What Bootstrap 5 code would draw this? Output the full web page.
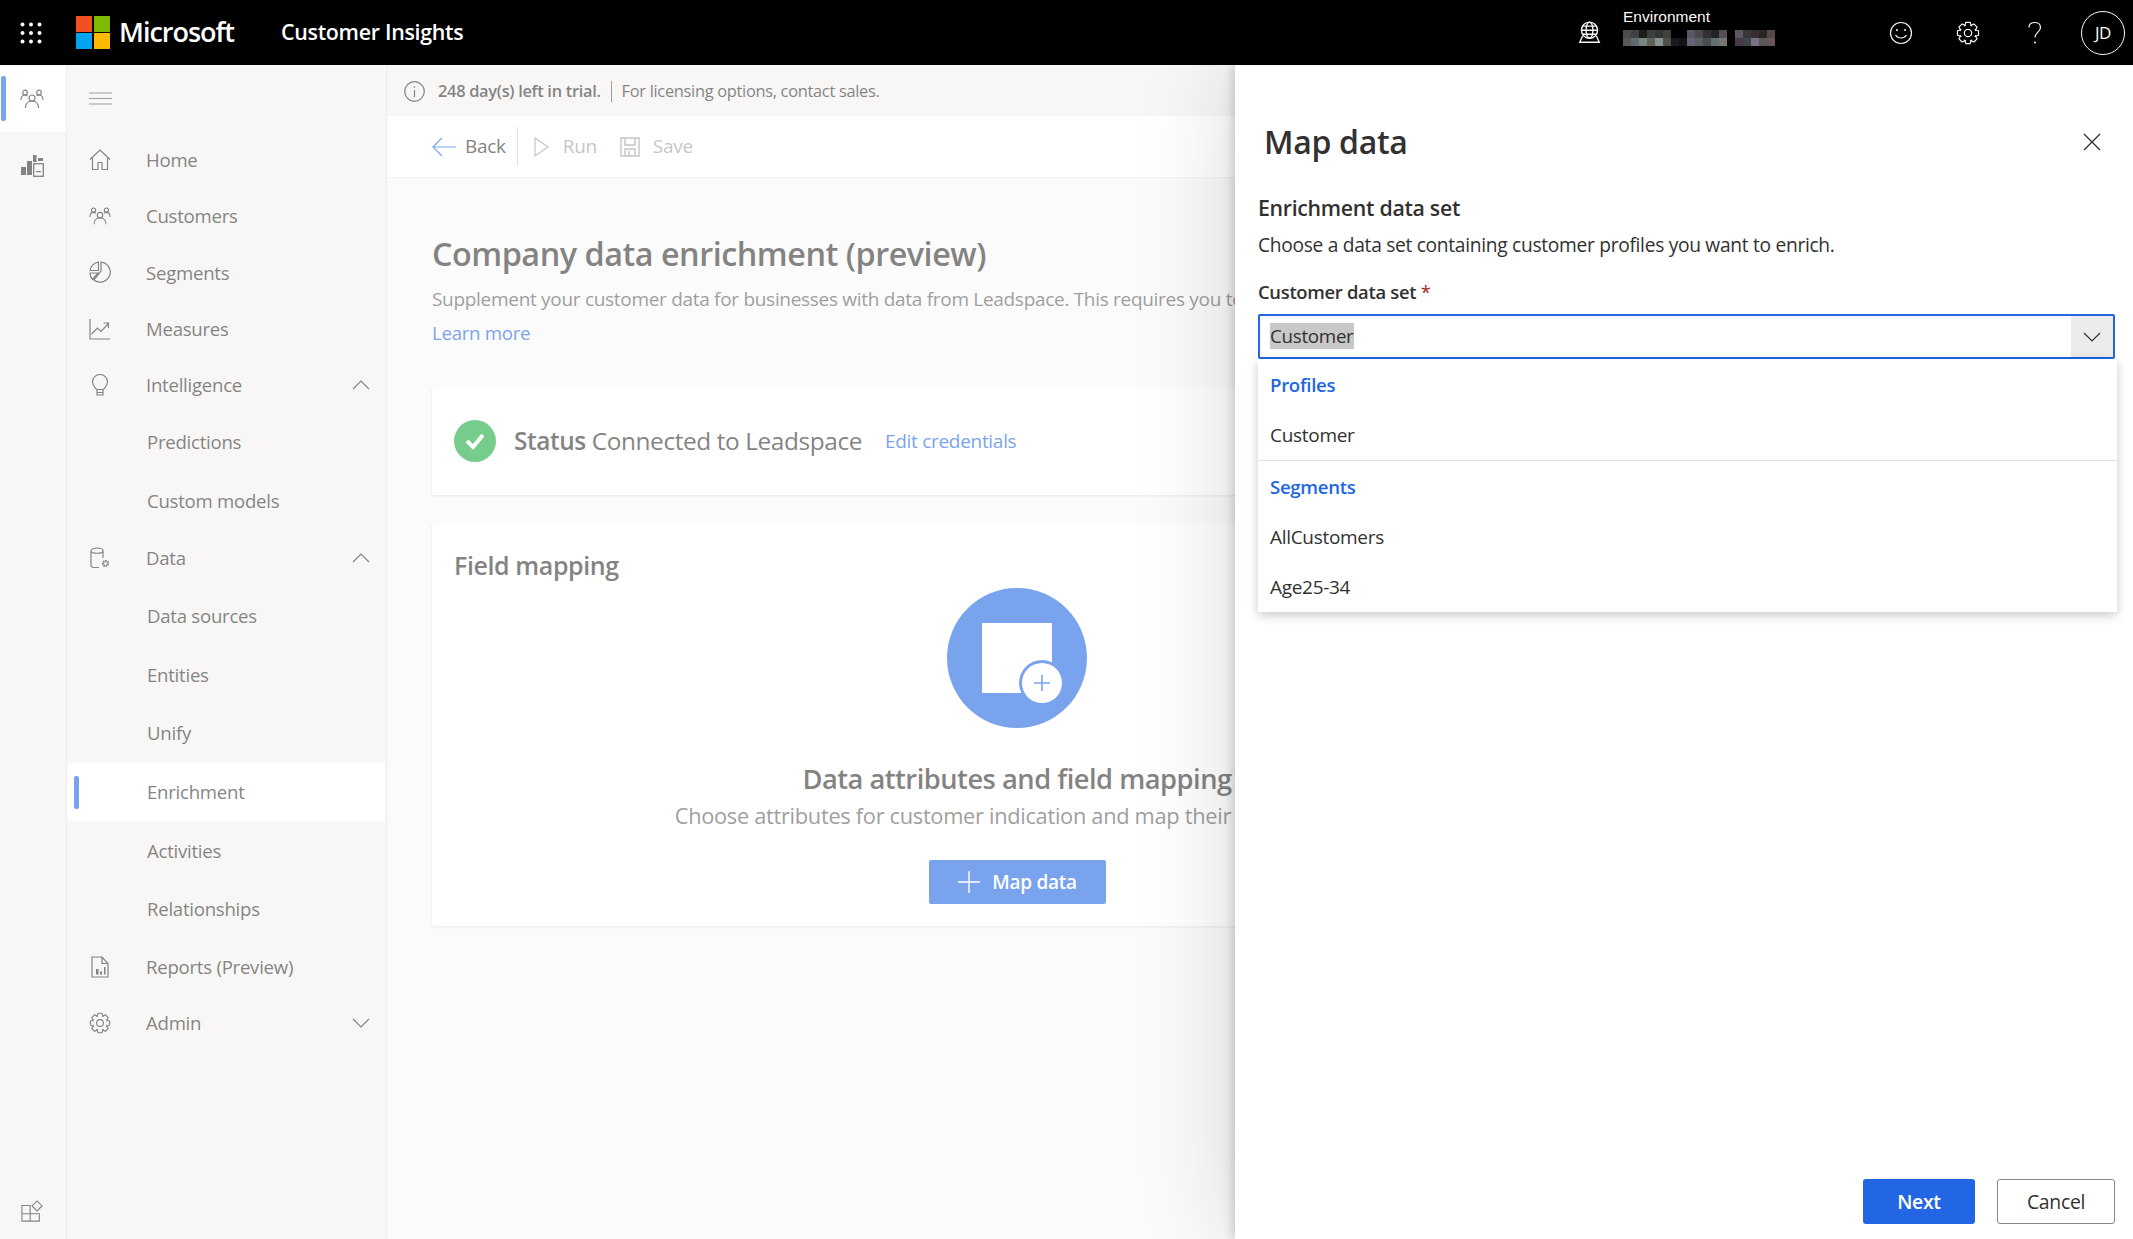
<!DOCTYPE html>
<html lang="en">
<head>
    <meta charset="UTF-8">
    <title>Customer Insights</title>
    <link href="https://cdn.jsdelivr.net/npm/bootstrap@5.3.0/dist/css/bootstrap.min.css" rel="stylesheet">
    <style>
        body {
            font-family: "Open Sans", "Noto Sans", sans-serif;
            color: #323130;
            height: 1239px;
            overflow: hidden;
        }
        svg { display: block; flex: none; }
        .line-icon { fill: none; stroke: currentColor; stroke-width: 1.2; }

        /* top bar */
        .app-bar { height: 65px; background: #000; color: #fff; }
        .waffle { margin-left: 20px; width: 22px; }
        .ms-logo { margin-left: 34px; }
        .ms-name { margin-left: 9px; font-size: 27px; font-weight: 600; letter-spacing: -1px; width: 162px; }
        .app-name { font-size: 21.4px; font-weight: 600; letter-spacing: -.3px; width: 190px; white-space: nowrap; }
        .env-globe { margin-left: 1107px; }
        .env-box { margin-left: 22px; width: 154px; align-self: flex-start; padding-top: 8px; }
        .env-label { font-family: "Liberation Sans", sans-serif; font-size: 15.5px; line-height: 17px; margin-bottom: 5px; }
        .bar-icons { margin-left: 112px; gap: 43px; }
        .avatar-ring {
            width: 44px; height: 44px; margin-left: 34px;
            border: 1px solid #fff; border-radius: 50%;
            font-size: 17px; letter-spacing: -.5px;
        }

        /* shell */
        .shell { height: 1174px; }
        .veil { position: absolute; inset: 0; background: rgba(255, 255, 255, .4); z-index: 5; }
        .rail { width: 67px; background: #f3f2f1; border-right: 1px solid #e4e2e0; color: #323130; }
        .rail > div { padding-right: 2px; }
        .rail-active { position: relative; height: 67px; background: #fff; }
        .rail-active::before {
            content: ""; position: absolute; left: 1px; top: 11px;
            width: 5px; height: 45px; background: #2266e3; border-radius: 2px;
        }
        .rail-slot { height: 67px; }
        .rail-foot { height: 39px; }

        .side { width: 320px; background: #f3f2f1; border-right: 1px solid #e4e2e0; font-size: 18.6px; letter-spacing: -.25px; color: #323130; }
        .side-burger { height: 67px; padding-left: 22px; }
        .side-row { height: 56.2px; padding-left: 22px; }
        .side-row .row-label { margin-left: 35px; flex: 1; }
        .side-sub { height: 58.7px; padding-left: 80px; position: relative; }
        .side-sub.is-on { background: #fff; border-radius: 3px; font-weight: 500; margin-right: 1px; }
        .side-sub.is-on::before {
            content: ""; position: absolute; left: 7px; top: 13px;
            width: 5px; height: 33px; background: #2266e3; border-radius: 2px;
        }
        .row-chev { margin-right: 16px; }

        /* page behind panel */
        .page-main { flex: 1; min-width: 0; background: #faf9f8; }
        .trial-bar { height: 51px; background: #f3f2f1; padding: 2px 0 0 17px; font-size: 16.4px; letter-spacing: -.3px; }
        .trial-strong { font-weight: 600; margin-left: 13px; }
        .trial-sep { width: 1px; height: 21px; background: #605e5c; margin: 0 10px; }
        .tool-bar { height: 62px; background: #fff; border-bottom: 1px solid #edebe9; padding-left: 45px; font-size: 19px; letter-spacing: -.3px; }
        .tool-sep { width: 1px; height: 39px; background: #d2d0ce; margin: 0 16px 0 11px; }
        .tool-off { color: #a19f9d; }
        .page-body { padding: 0 0 0 45px; width: 1215px; }
        .page-title { font-size: 32.4px; font-weight: 600; letter-spacing: -.5px; margin: 53px 0 0; line-height: 44px; white-space: nowrap; }
        .page-desc { font-size: 19px; letter-spacing: -.3px; color: #605e5c; white-space: nowrap; margin: 11px 0 0; line-height: 26px; }
        .page-link { color: #2266e3; font-size: 18.7px; letter-spacing: -.3px; text-decoration: none; }
        .learn-row { margin-top: 8px; line-height: 26px; margin-bottom: 41px; }
        .panel-card { background: #fff; box-shadow: 0 1px 3px rgba(0, 0, 0, .13); border-radius: 2px; }
        .status-card { height: 108px; padding-left: 22px; }
        .status-tick { width: 42px; height: 42px; border-radius: 50%; background: #1caa3c; }
        .status-text { font-size: 24.4px; letter-spacing: -.4px; margin-left: 18px; }
        .status-text b { font-weight: 600; }
        .edit-link { font-size: 19px; margin-left: 23px; }
        .map-card { height: 403px; margin-top: 28px; padding: 24px 22px 0; }
        .map-card h3 { font-size: 25px; font-weight: 600; letter-spacing: -.4px; margin: 0; line-height: 36px; }
        .map-center { margin-top: 5px; }
        .empty-title { font-size: 27.3px; font-weight: 600; letter-spacing: -.5px; margin: 33px 0 0; line-height: 36px; white-space: nowrap; }
        .empty-sub { font-size: 21.8px; letter-spacing: -.3px; color: #605e5c; margin: 4px 0 0; line-height: 30px; white-space: nowrap; }
        .btn-map {
            --bs-btn-bg: #2266e3; --bs-btn-color: #fff; --bs-btn-border-color: #2266e3;
            width: 177px; height: 44px; margin-top: 29px; padding: 0; gap: 11px;
            font-size: 19px; font-weight: 600; letter-spacing: -.3px; border-radius: 2px;
        }

        /* side panel */
        .map-panel {
            position: absolute; top: 0; right: 0; bottom: 0; width: 898px; z-index: 10;
            background: #fff; padding: 0 18px 15px 23px;
            box-shadow: -6px 0 90px rgba(0, 0, 0, .14), -2px 0 10px rgba(0, 0, 0, .18);
        }
        .panel-head { height: 110px; padding: 44px 14px 0 6px; }
        .panel-head h2 { font-size: 32px; font-weight: 600; letter-spacing: -.3px; margin: 0; }
        .panel-sub { font-size: 21.3px; font-weight: 600; letter-spacing: -.3px; line-height: 28px; margin: 19px 0 0; }
        .panel-hint { font-size: 19.2px; letter-spacing: -.3px; line-height: 26px; margin: 10px 0 0; }
        .field-label { font-size: 18.4px; font-weight: 600; letter-spacing: -.3px; line-height: 26px; margin: 21px 0 9px; display: block; }
        .field-label i { color: #a4262c; font-style: normal; font-weight: 400; }
        .combo-wrap { position: relative; }
        .combo-box { height: 45px; border: 2px solid #2266e3; border-radius: 2px; padding-left: 10px; font-size: 18.8px; letter-spacing: -.3px; }
        .combo-pick { background: #c8c8c8; line-height: 26px; margin-bottom: 2px; }
        .combo-arrow { width: 42px; align-self: stretch; background: #edebe9; margin-left: auto; }
        .combo-menu.dropdown-menu {
            position: absolute; top: 45px; left: 0; width: 859px; padding: 0;
            border: 0; border-radius: 0; box-shadow: 0 3px 10px rgba(0, 0, 0, .22);
            font-size: 19px; letter-spacing: -.3px; --bs-dropdown-min-width: 0;
        }
        .combo-menu .dropdown-header { color: #2266e3; font-weight: 600; font-size: 18.6px; padding: 0 12px; height: 51px; display: flex; align-items: center; }
        .combo-menu .dropdown-item { color: #323130; padding: 0 12px; height: 50px; display: flex; align-items: center; }
        .combo-menu .dropdown-divider { margin: 0; border-color: #e1dfdd; }
        .panel-foot { margin-top: auto; gap: 22px; }
        .btn-next, .btn-cancel { height: 45px; padding: 0; font-size: 19.4px; border-radius: 3px; letter-spacing: -.3px; }
        .btn-next { width: 112px; background: #2266e3; border: 0; color: #fff; font-weight: 600; }
        .btn-cancel { width: 118px; background: #fff; border: 1px solid #8a8886; color: #323130; font-weight: 500; }
        .btn-next:hover { background: #2266e3; color: #fff; }
    </style>
</head>
<body>
    <!-- Top bar -->
    <header class="app-bar d-flex align-items-center">
        <svg class="waffle" width="22" height="22" viewBox="0 0 22 22" fill="#fff">
            <circle cx="2.5" cy="2.5" r="2"/><circle cx="11" cy="2.5" r="2"/><circle cx="19.5" cy="2.5" r="2"/>
            <circle cx="2.5" cy="11" r="2"/><circle cx="11" cy="11" r="2"/><circle cx="19.5" cy="11" r="2"/>
            <circle cx="2.5" cy="19.5" r="2"/><circle cx="11" cy="19.5" r="2"/><circle cx="19.5" cy="19.5" r="2"/>
        </svg>
        <svg class="ms-logo" width="34" height="33" viewBox="0 0 34 33">
            <rect width="16" height="16" fill="#f25022"/><rect x="18" width="16" height="16" fill="#7fba00"/>
            <rect y="17" width="16" height="16" fill="#00a4ef"/><rect x="18" y="17" width="16" height="16" fill="#ffb900"/>
        </svg>
        <span class="ms-name">Microsoft</span>
        <span class="app-name">Customer Insights</span>
        <svg class="env-globe line-icon" width="23" height="23" viewBox="0 0 20 20">
            <circle cx="10" cy="8" r="7"/><ellipse cx="10" cy="8" rx="3" ry="7"/><path d="M3 8h14M4 4.500h12M4 11.500h12M4 13 1.500 18.500h17L16 13"/>
        </svg>
        <div class="env-box">
            <div class="env-label">Environment</div>
            <svg width="154" height="18" viewBox="0 0 154 18">
                <g id="pixels"></g>
            </svg>
        </div>
        <div class="bar-icons d-flex align-items-center">
            <svg class="line-icon" width="24" height="24" viewBox="0 0 24 24" stroke-width="1.6">
                <circle cx="12" cy="12" r="10.500"/><circle cx="8" cy="9" r="1" fill="#fff" stroke="none"/><circle cx="16" cy="9" r="1" fill="#fff" stroke="none"/><path d="M6.500 14c2.500 4 8.500 4 11 0"/>
            </svg>
            <svg class="line-icon gear-icon" width="24" height="24" viewBox="0 0 24 24" stroke-width="1.500"><path/><circle cx="12" cy="12" r="3.700"/></svg>
            <svg class="line-icon" width="24" height="24" viewBox="0 0 24 24" stroke-width="1.400">
                <path d="M6 6.500C6 3 8.800 1.500 11.700 1.500c3.100 0 5.800 1.900 5.800 5 0 4.600-5.500 4.700-5.500 10"/><circle cx="12" cy="21.500" r="1" fill="#fff" stroke="none"/>
            </svg>
        </div>
        <div class="avatar-ring d-flex align-items-center justify-content-center">JD</div>
    </header>

    <div class="shell d-flex position-relative">
        <div class="veil"></div>

        <!-- Icon rail -->
        <nav class="rail d-flex flex-column">
            <div class="rail-active d-flex align-items-center justify-content-center">
                <svg class="line-icon" width="24" height="20" viewBox="0 0 24 20"><use href="#people"/></svg>
            </div>
            <div class="rail-slot d-flex align-items-center justify-content-center">
                <svg width="23" height="23" viewBox="0 0 23 23" fill="#323130">
                    <rect x="0" y="13" width="5" height="8"/><rect x="6" y="7" width="5" height="14"/><rect x="12" y="1" width="3.500" height="7"/>
                    <rect x="12.700" y="9.700" width="9.600" height="12.600" fill="none" stroke="#323130" stroke-width="1.300"/><rect x="15" y="17" width="5" height="1.200"/><rect x="17" y="4" width="5" height="3"/>
                </svg>
            </div>
            <div class="rail-foot mt-auto d-flex justify-content-center">
                <svg class="line-icon" width="22" height="22" viewBox="0 0 24 24" stroke-width="1.600">
                    <path d="M1 6h9v17H1zM1 15h19v8H10M10 15h10v8"/><path d="M17.500 1 23 6.500 17.500 12 12 6.500z"/>
                </svg>
            </div>
        </nav>

        <!-- Sidebar -->
        <nav class="side flex-shrink-0">
            <div class="side-burger d-flex align-items-center">
                <svg width="23" height="13" viewBox="0 0 23 13" stroke="#605e5c" stroke-width="1"><path d="M0 1h23M0 6.500h23M0 12h23"/></svg>
            </div>
            <div class="side-row d-flex align-items-center">
                <svg class="line-icon" width="22" height="22" viewBox="0 0 22 22"><path d="M1 10.500 11 1l10 9.500M3.500 9v11.500h5.500V13.500h4v7h5.500V9"/></svg>
                <span class="row-label">Home</span>
            </div>
            <div class="side-row d-flex align-items-center">
                <svg class="line-icon" width="22" height="20" viewBox="0 0 24 20"><use href="#people"/></svg>
                <span class="row-label">Customers</span>
            </div>
            <div class="side-row d-flex align-items-center">
                <svg class="line-icon" width="22" height="22" viewBox="0 0 22 22"><path d="M12 1.200A10 10 0 1 1 5 19l7-9zM9.500 1.200A9.500 9.500 0 0 0 1 9.500h8.500zM1 12h8l-5.500 6.500A9.500 9.500 0 0 1 1 12z"/></svg>
                <span class="row-label">Segments</span>
            </div>
            <div class="side-row d-flex align-items-center">
                <svg class="line-icon" width="22" height="22" viewBox="0 0 22 22"><path d="M1 1v20h20"/><path d="m2.500 16 6-6 3.500 3.500 7.500-8M14.500 5h5v5"/></svg>
                <span class="row-label">Measures</span>
            </div>
            <div class="side-row d-flex align-items-center">
                <svg class="line-icon" width="22" height="22" viewBox="0 0 22 22"><path d="M7.500 15.500C5.500 13 3.500 11.500 3.500 8a7.500 7.500 0 0 1 15 0c0 3.500-2 5-4 7.500zM8 15.500V21h6v-5.500M8 18.500h6"/></svg>
                <span class="row-label">Intelligence</span>
                <svg class="line-icon row-chev" width="18" height="10" viewBox="0 0 18 10"><path d="m1 9 8-8 8 8"/></svg>
            </div>
            <div class="side-sub d-flex align-items-center">Predictions</div>
            <div class="side-sub d-flex align-items-center">Custom models</div>
            <div class="side-row d-flex align-items-center">
                <svg class="line-icon" width="22" height="22" viewBox="0 0 22 22"><path d="M10 20.500H4.500c-1.500 0-2.500-1-2.500-2V4c0-4 12-4 12 0v7M2 4c0 3 12 3 12 0"/><circle cx="16.500" cy="16.500" r="2.500" stroke-width="2.200" stroke-dasharray="1.600 .6"/></svg>
                <span class="row-label">Data</span>
                <svg class="line-icon row-chev" width="18" height="10" viewBox="0 0 18 10"><path d="m1 9 8-8 8 8"/></svg>
            </div>
            <div class="side-sub d-flex align-items-center">Data sources</div>
            <div class="side-sub d-flex align-items-center">Entities</div>
            <div class="side-sub d-flex align-items-center">Unify</div>
            <div class="side-sub is-on d-flex align-items-center">Enrichment</div>
            <div class="side-sub d-flex align-items-center">Activities</div>
            <div class="side-sub d-flex align-items-center">Relationships</div>
            <div class="side-row d-flex align-items-center">
                <svg class="line-icon" width="22" height="22" viewBox="0 0 22 22"><path d="M3 1h10l6 6.500V21H3zM13 1v6.500h6"/><path d="M7 13h2.500v5.500H7zM11 15.500h2v3h-2zM15 11h1.500v7.500H15z" fill="#323130" stroke="none"/></svg>
                <span class="row-label">Reports (Preview)</span>
            </div>
            <div class="side-row d-flex align-items-center">
                <svg class="line-icon gear-icon" width="22" height="22" viewBox="0 0 24 24"><path/><circle cx="12" cy="12" r="3.700"/></svg>
                <span class="row-label">Admin</span>
                <svg class="line-icon row-chev" width="18" height="10" viewBox="0 0 18 10"><path d="m1 1 8 8 8-8"/></svg>
            </div>
        </nav>

        <!-- Page behind the panel -->
        <main class="page-main overflow-hidden">
            <div class="trial-bar d-flex align-items-center">
                <svg class="line-icon" width="21" height="21" viewBox="0 0 21 21"><circle cx="10.500" cy="10.500" r="9.800"/><path d="M10.500 9v7"/><circle cx="10.500" cy="6" r=".8" fill="#323130" stroke="none"/></svg>
                <span class="trial-strong">248 day(s) left in trial.</span>
                <span class="trial-sep"></span>
                <span>For licensing options, contact sales.</span>
            </div>
            <div class="tool-bar d-flex align-items-center">
                <svg class="me-2" width="24" height="20" viewBox="0 0 24 20" fill="none" stroke="#2266e3" stroke-width="1.200"><path d="M10 1 1 10l9 9M1 10h23"/></svg>
                <span style="margin-left:1px">Back</span>
                <span class="tool-sep"></span>
                <svg class="tool-off" width="15" height="20" viewBox="0 0 15 20" fill="none" stroke="currentColor" stroke-width="1.200"><path d="M1 1v18l13-9z"/></svg>
                <span class="tool-off" style="margin-left:14px">Run</span>
                <svg class="tool-off" style="margin-left:23px" width="20" height="20" viewBox="0 0 20 20" fill="none" stroke="currentColor" stroke-width="1.400"><path d="M1 1h18v18H1zM5 1v7h10V1M5 19v-7h10v7M9 14v5"/></svg>
                <span class="tool-off" style="margin-left:13px">Save</span>
            </div>
            <div class="page-body">
                <h1 class="page-title">Company data enrichment (preview)</h1>
                <p class="page-desc">Supplement your customer data for businesses with data from Leadspace. This requires you to</p>
                <div class="learn-row"><a class="page-link" href="#">Learn more</a></div>
                <section class="panel-card status-card d-flex align-items-center">
                    <div class="status-tick d-flex align-items-center justify-content-center">
                        <svg width="22" height="18" viewBox="0 0 22 18" fill="none" stroke="#fff" stroke-width="4"><path d="m3 9 6 6L19 3"/></svg>
                    </div>
                    <div class="status-text"><b>Status</b> Connected to Leadspace</div>
                    <a class="page-link edit-link" href="#">Edit credentials</a>
                </section>
                <section class="panel-card map-card">
                    <h3>Field mapping</h3>
                    <div class="map-center d-flex flex-column align-items-center">
                        <svg width="140" height="140" viewBox="0 0 140 140">
                            <circle cx="70" cy="70" r="70" fill="#2266e3"/>
                            <rect x="35" y="35" width="70" height="70" fill="#fff"/>
                            <circle cx="95" cy="95" r="23" fill="#2266e3"/>
                            <circle cx="95" cy="95" r="20" fill="#fff"/>
                            <path d="M95 87v16M87 95h16" stroke="#2266e3" stroke-width="1.600"/>
                        </svg>
                        <h4 class="empty-title">Data attributes and field mapping</h4>
                        <p class="empty-sub">Choose attributes for customer indication and map their fields below.</p>
                        <button class="btn btn-map d-flex align-items-center justify-content-center">
                            <svg width="24" height="24" viewBox="0 0 24 24" stroke="#fff" stroke-width="1.400"><path d="M12 1v22M1 12h22"/></svg>
                            Map data
                        </button>
                    </div>
                </section>
            </div>
        </main>

        <!-- Map data panel -->
        <aside class="map-panel d-flex flex-column">
            <div class="panel-head d-flex align-items-center justify-content-between flex-shrink-0">
                <h2>Map data</h2>
                <svg width="18" height="18" viewBox="0 0 18 18" stroke="#323130" stroke-width="1.300"><path d="m1 1 16 16M17 1 1 17"/></svg>
            </div>
            <h5 class="panel-sub">Enrichment data set</h5>
            <p class="panel-hint mb-0">Choose a data set containing customer profiles you want to enrich.</p>
            <label class="field-label">Customer data set <i>*</i></label>
            <div class="combo-wrap">
                <div class="combo-box d-flex align-items-center">
                    <span class="combo-pick">Customer</span>
                    <span class="combo-arrow d-flex align-items-center justify-content-center">
                        <svg width="18" height="10" viewBox="0 0 18 10" fill="none" stroke="#323130" stroke-width="1.200"><path d="m1 1 8 8 8-8"/></svg>
                    </span>
                </div>
                <div class="combo-menu dropdown-menu show">
                    <div class="dropdown-header">Profiles</div>
                    <a class="dropdown-item" href="#">Customer</a>
                    <hr class="dropdown-divider">
                    <div class="dropdown-header">Segments</div>
                    <a class="dropdown-item" href="#">AllCustomers</a>
                    <a class="dropdown-item" href="#">Age25-34</a>
                </div>
            </div>
            <div class="panel-foot d-flex justify-content-end">
                <button class="btn btn-next">Next</button>
                <button class="btn btn-cancel">Cancel</button>
            </div>
        </aside>
    </div>

    <svg width="0" height="0" class="position-absolute">
        <symbol id="people" viewBox="0 0 24 20">
            <circle cx="5" cy="3.500" r="2.300"/><circle cx="19" cy="3.500" r="2.300"/><circle cx="12" cy="9" r="3"/>
            <path d="M1 11c0-3 1.500-5 4-5 1 0 2 .4 2.600 1M23 11c0-3-1.500-5-4-5-1 0-2 .4-2.600 1M5.500 19c0-4 2.500-7 6.500-7s6.500 3 6.500 7"/>
        </symbol>
    </svg>

    <script src="https://cdn.jsdelivr.net/npm/bootstrap@5.3.0/dist/js/bootstrap.bundle.min.js"></script>
    <script>
        // Gear outline shared by the settings icons
        function gearPath() {
            const pts = [];
            for (let i = 0; i < 8; i++) {
                const a = i * Math.PI / 4;
                [[8, -0.42], [10.8, -0.2], [10.8, 0.2], [8, 0.42]].forEach(([r, d]) => {
                    pts.push((12 + r * Math.cos(a + d)).toFixed(2) + ' ' + (12 + r * Math.sin(a + d)).toFixed(2));
                });
            }
            return 'M' + pts.join('L') + 'Z';
        }
        document.querySelectorAll('.gear-icon path').forEach(p => p.setAttribute('d', gearPath()));

        // Blurred environment name
        const cells = [
            [0, 0, '#4c4f4f'], [8, 0, '#404444'], [16, 0, '#1e1e1e'], [24, 0, '#3f4442'], [32, 0, '#343a39'], [40, 0, '#45453f'],
            [64, 0, '#5f5a68'], [72, 0, '#4f4a50'], [80, 0, '#333333'], [88, 0, '#262626'], [96, 0, '#56525c'],
            [112, 0, '#625a68'], [120, 0, '#3a3a3c'], [128, 0, '#3a3038'], [136, 0, '#2a2826'], [144, 0, '#5a4a4c'],
            [0, 8, '#5c5c58'], [8, 8, '#647078'], [16, 8, '#848a88'], [24, 8, '#66665a'], [32, 8, '#8a9a98'], [40, 8, '#54544a'],
            [48, 8, '#1c1c20'], [56, 8, '#141414'],
            [64, 8, '#6e667c'], [72, 8, '#5c6462'], [80, 8, '#4c5054'], [88, 8, '#667678'], [96, 8, '#7e7c78'],
            [112, 8, '#4e3c4c'], [120, 8, '#3e4a44'], [128, 8, '#7e7890'], [136, 8, '#5c5c5c'], [144, 8, '#6e5a5c']
        ];
        document.getElementById('pixels').innerHTML = cells.map(c =>
            `<rect x="${c[0]}" y="${c[1]}" width="8" height="8" fill="${c[2]}"/>`).join('');
    </script>
</body>
</html>
